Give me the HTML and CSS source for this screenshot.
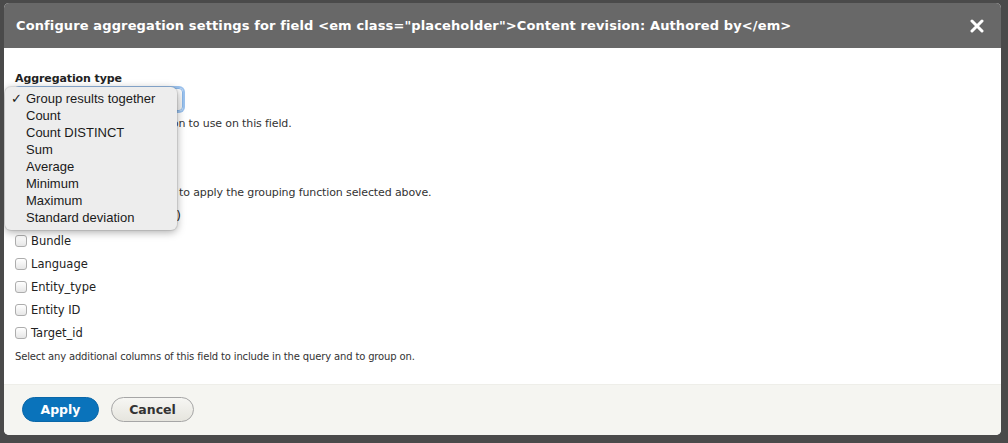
FILE: index.html
```html
<!DOCTYPE html>
<html>
<head>
<meta charset="utf-8">
<link rel="stylesheet" href="styles.css">
</head>
<body>
<div class="backdrop">
  <div class="dialog">
    <div class="titlebar">
      <span class="title">Configure aggregation settings for field &lt;em class="placeholder"&gt;Content revision: Authored by&lt;/em&gt;</span>
      <span class="close">
        <svg width="14" height="14" viewBox="0 0 14 14"><path d="M2 2 L12 12 M12 2 L2 12" stroke="#fff" stroke-width="3" stroke-linecap="round"/></svg>
      </span>
    </div>
    <div class="content">
      <div class="field">
        <div class="label">Aggregation type</div>
        <div class="select focused">Group results together</div>
        <div class="desc">Select the aggregation function to use on this field.</div>
      </div>
      <div class="field">
        <div class="label">Group column</div>
        <div class="select narrow">Entity ID</div>
        <div class="desc">Select the column of this field to apply the grouping function selected above.</div>
      </div>
      <div class="field">
        <div class="label plain">Group columns (additional)</div>
        <label class="check"><span class="box"></span>Bundle</label>
        <label class="check"><span class="box"></span>Language</label>
        <label class="check"><span class="box"></span>Entity_type</label>
        <label class="check"><span class="box"></span>Entity ID</label>
        <label class="check"><span class="box"></span>Target_id</label>
        <div class="desc small">Select any additional columns of this field to include in the query and to group on.</div>
      </div>
      <div class="popup">
        <div class="opt"><span class="tick">✓</span>Group results together</div>
        <div class="opt">Count</div>
        <div class="opt">Count DISTINCT</div>
        <div class="opt">Sum</div>
        <div class="opt">Average</div>
        <div class="opt">Minimum</div>
        <div class="opt">Maximum</div>
        <div class="opt">Standard deviation</div>
      </div>
    </div>
    <div class="footer">
      <button class="btn primary">Apply</button>
      <button class="btn">Cancel</button>
    </div>
  </div>
</div>
</body>
</html>
```
FILE: styles.css
```css
html, body {
  margin: 0;
  padding: 0;
  background: #4a4a4a;
  width: 1008px;
  height: 443px;
  overflow: hidden;
}
.backdrop {
  padding: 3px 0 0 4px;
}
.dialog {
  width: 997px;
  height: 432px;
  background: #fff;
  border-radius: 5px;
  overflow: hidden;
  display: flex;
  flex-direction: column;
  font-family: "DejaVu Sans", sans-serif;
}
.titlebar {
  height: 45px;
  flex: none;
  background: #686868;
  display: flex;
  align-items: center;
  justify-content: space-between;
  padding: 0 17px 0 12px;
}
.title {
  color: #fff;
  font-weight: bold;
  font-size: 13px;
  letter-spacing: 0.12px;
}
.close {
  display: flex;
  align-items: center;
}
.content {
  position: relative;
  flex: 1;
  padding: 23px 11px 0 11px;
  color: #333;
}
.field {
  margin-bottom: 9px;
}
.label {
  font-weight: bold;
  font-size: 11px;
  letter-spacing: -0.1px;
  line-height: 15px;
  color: #222;
}
.label.plain {
  font-weight: normal;
  font-size: 12px;
  letter-spacing: 0.1px;
}
.select {
  margin-top: 2px;
  width: 160px;
  height: 21px;
  border: 1px solid #b8b8b8;
  border-radius: 4px;
  font-size: 12px;
  line-height: 21px;
  padding-left: 6px;
  background: linear-gradient(#fdfdfd, #eee);
  color: transparent;
}
.select.narrow {
  width: 140px;
}
.select.focused {
  border-color: #8ab7e8;
  box-shadow: 0 0 0 2px #9cc3ef;
}
.desc {
  font-size: 11px;
  letter-spacing: -0.12px;
  line-height: 14px;
  margin-top: 6px;
  color: #333;
}
.desc.small {
  font-size: 10px;
  letter-spacing: -0.15px;
}
.check {
  display: flex;
  align-items: center;
  font-size: 11.5px;
  line-height: 16px;
  height: 23px;
  color: #222;
}
.check:first-of-type {
  margin-top: 5px;
}
.box {
  width: 10px;
  height: 10px;
  border: 1px solid #adadad;
  border-radius: 3px;
  background: linear-gradient(#fff, #e6e6e6);
  margin-right: 4px;
}
.popup {
  position: absolute;
  left: 1px;
  top: 39px;
  width: 172px;
  padding: 3px 0 4px;
  background: #ededed;
  border-radius: 6px;
  box-shadow: 0 2px 8px rgba(0,0,0,0.35), 0 0 0 1px rgba(0,0,0,0.08);
  font-family: "Liberation Sans", sans-serif;
  font-size: 13px;
  color: #1a1a1a;
}
.opt {
  position: relative;
  line-height: 17px;
  padding-left: 21px;
}
.tick {
  position: absolute;
  left: 6px;
  top: 0;
}
.footer {
  height: 51px;
  flex: none;
  background: #f5f5f1;
  border-top: 1px solid #eeeee9;
  display: flex;
  align-items: flex-start;
  padding: 12px 0 0 18px;
  box-sizing: border-box;
  gap: 12px;
}
.btn {
  height: 25px;
  border-radius: 13px;
  border: 1px solid #a6a6a6;
  background: linear-gradient(#f6f6f3, #e6e5de);
  color: #333;
  font-family: "DejaVu Sans", sans-serif;
  font-weight: bold;
  font-size: 12.5px;
  padding: 0;
  width: 83px;
}
.btn.primary {
  background: #0a73bb;
  border-color: #0a67a8;
  color: #fff;
  width: 77px;
}
```
